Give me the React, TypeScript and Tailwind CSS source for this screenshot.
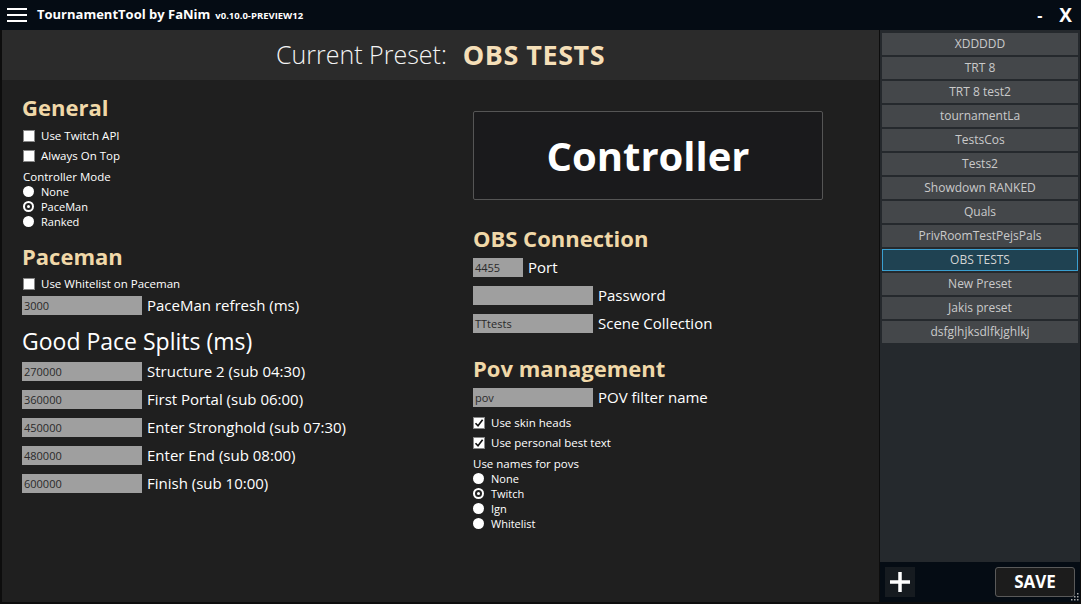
import React from 'react';

const presets = [
  'XDDDDD',
  'TRT 8',
  'TRT 8 test2',
  'tournamentLa',
  'TestsCos',
  'Tests2',
  'Showdown RANKED',
  'Quals',
  'PrivRoomTestPejsPals',
  'OBS TESTS',
  'New Preset',
  'Jakis preset',
  'dsfglhjksdlfkjghlkj',
];

const splits = [
  ['270000', 'Structure 2 (sub 04:30)'],
  ['360000', 'First Portal (sub 06:00)'],
  ['450000', 'Enter Stronghold (sub 07:30)'],
  ['480000', 'Enter End (sub 08:00)'],
  ['600000', 'Finish (sub 10:00)'],
];

function Check({ checked, label }: { checked?: boolean; label: string }) {
  return (
    <div className="flex items-center h-[20px] text-[11.5px] leading-[16px] text-white">
      <span className="w-[12px] h-[12px] bg-white border border-[#888] flex items-center justify-center mr-[6px]">
        {checked && (
          <svg width="10" height="10" viewBox="0 0 10 10">
            <path d="M1.5 5.2 L4 7.8 L8.6 1.8" stroke="#111" strokeWidth="1.6" fill="none" />
          </svg>
        )}
      </span>
      {label}
    </div>
  );
}

function Radio({ checked, label }: { checked?: boolean; label: string }) {
  return (
    <div className="flex items-center h-[15px] text-[11px] leading-[15px] text-white">
      <span className="w-[11px] h-[11px] rounded-full bg-white flex items-center justify-center mr-[7px]">
        {checked && <span className="w-[7px] h-[7px] rounded-full border-[2px] border-[#222] bg-white" />}
      </span>
      {label}
    </div>
  );
}

function Field({ value, width, label }: { value: string; width: string; label: string }) {
  return (
    <div className="flex items-center h-[28px]">
      <div className={`${width} h-[19px] bg-[#9f9f9f] text-[#2a2a2a] text-[11px] leading-[19px] px-[2px]`}>{value}</div>
      <span className="ml-[5px] text-[15px] text-white">{label}</span>
    </div>
  );
}

function Heading({ children }: { children: React.ReactNode }) {
  return <h2 className="text-[22px] font-bold leading-[30px] text-[#f0d8a8]">{children}</h2>;
}

export default function App() {
  return (
    <div
      className="w-[1081px] h-[604px] bg-[#0d0d0d] flex flex-col overflow-hidden"
      style={{ fontFamily: '"Open Sans", "Noto Sans", sans-serif' }}
    >
      {/* title bar */}
      <div className="h-[30px] bg-[#050c14] flex items-center shrink-0">
        <div className="ml-[7px] w-[20px] flex flex-col gap-[4px]">
          <span className="h-[2px] bg-white" />
          <span className="h-[2px] bg-white" />
          <span className="h-[2px] bg-white" />
        </div>
        <span className="ml-[10px] text-[13px] font-bold text-white">TournamentTool by FaNim</span>
        <span className="ml-[5px] mt-[2px] text-[9.5px] font-bold text-white">v0.10.0-PREVIEW12</span>
        <span className="ml-auto text-[16px] font-bold text-white">-</span>
        <span className="ml-[17px] mr-[9px] text-[19px] font-bold text-white">X</span>
      </div>

      <div className="flex flex-1 min-h-0 pb-[2px]">
        {/* main panel */}
        <div className="ml-[2px] w-[877px] bg-[#1f1f1f] flex flex-col">
          <div className="h-[50px] bg-[#2b2b2b] flex items-center justify-center text-[25px] text-[#f4f4f4]">
            <span className="font-light">Current Preset:</span>
            <span className="ml-[16px] font-bold text-[27px] tracking-[0.5px] text-[#f5dfb8]">OBS TESTS</span>
          </div>

          <div className="flex flex-1">
            {/* left column */}
            <div className="w-[451px] pl-[20px] pt-[12px]">
              <Heading>General</Heading>
              <div className="pl-[1px] mt-[4px]">
                <Check label="Use Twitch API" />
                <Check label="Always On Top" />
                <div className="text-[11.5px] text-white mt-[3px] h-[15px] leading-[15px]">Controller Mode</div>
                <Radio label="None" />
                <Radio checked label="PaceMan" />
                <Radio label="Ranked" />
              </div>

              <div className="mt-[12px]">
                <Heading>Paceman</Heading>
              </div>
              <div className="pl-[1px] mt-[3px]">
                <Check label="Use Whitelist on Paceman" />
              </div>
              <div className="-mt-[3px]">
                <Field value="3000" width="w-[120px]" label="PaceMan refresh (ms)" />
              </div>

              <div className="mt-[6px] text-[23px] leading-[32px] text-white">Good Pace Splits (ms)</div>
              {splits.map(([v, l]) => (
                <Field key={v} value={v} width="w-[120px]" label={l} />
              ))}
            </div>

            {/* middle column */}
            <div className="pl-[20px] pt-[31px]">
              <button className="w-[350px] h-[89px] bg-[#1a1a1c] border border-[#555] rounded-[2px] text-[40px] font-bold text-white">
                Controller
              </button>

              <div className="mt-[23px]">
                <Heading>OBS Connection</Heading>
              </div>
              <div>
                <Field value="4455" width="w-[50px]" label="Port" />
                <Field value="" width="w-[120px]" label="Password" />
                <Field value="TTtests" width="w-[120px]" label="Scene Collection" />
              </div>

              <div className="mt-[16px]">
                <Heading>Pov management</Heading>
              </div>
              <Field value="pov" width="w-[120px]" label="POV filter name" />
              <div className="mt-[2px]">
                <Check checked label="Use skin heads" />
                <Check checked label="Use personal best text" />
              </div>
              <div className="text-[11.5px] text-white mt-[3px] h-[15px] leading-[15px]">Use names for povs</div>
              <Radio label="None" />
              <Radio checked label="Twitch" />
              <Radio label="Ign" />
              <Radio label="Whitelist" />
            </div>
          </div>
        </div>

        {/* sidebar */}
        <div className="ml-[1px] w-[200px] bg-[#25292d] flex flex-col">
          <div className="flex-1 px-[2px] pt-[3px] flex flex-col gap-[2px]">
            {presets.map((p) => (
              <div
                key={p}
                className={
                  p === 'OBS TESTS'
                    ? 'h-[22px] bg-[#1f4252] border border-[#3a9fd0] flex items-center justify-center text-[12px] text-[#d4d4d4]'
                    : 'h-[22px] bg-[#44474a] flex items-center justify-center text-[12px] text-[#cacaca]'
                }
              >
                {p}
              </div>
            ))}
          </div>
          <div className="h-[40px] bg-[#050c14] flex items-center relative">
            <div className="ml-[5px] w-[30px] h-[30px] bg-[#161b20] flex items-center justify-center">
              <svg width="22" height="22" viewBox="0 0 22 22">
                <path d="M11 1 V21 M1 11 H21" stroke="white" strokeWidth="3.5" />
              </svg>
            </div>
            <button className="ml-auto mr-[5px] w-[80px] h-[30px] bg-[#1c1c1c] border border-[#5a5a5a] rounded-[3px] text-[17px] font-bold text-white">
              SAVE
            </button>
            <svg className="absolute right-[1px] bottom-[1px]" width="10" height="10" viewBox="0 0 10 10">
              {[
                [8, 2], [8, 5], [5, 5], [8, 8], [5, 8], [2, 8],
              ].map(([x, y], i) => (
                <rect key={i} x={x} y={y} width="1.5" height="1.5" fill="#aaa" />
              ))}
            </svg>
          </div>
        </div>
      </div>
    </div>
  );
}
